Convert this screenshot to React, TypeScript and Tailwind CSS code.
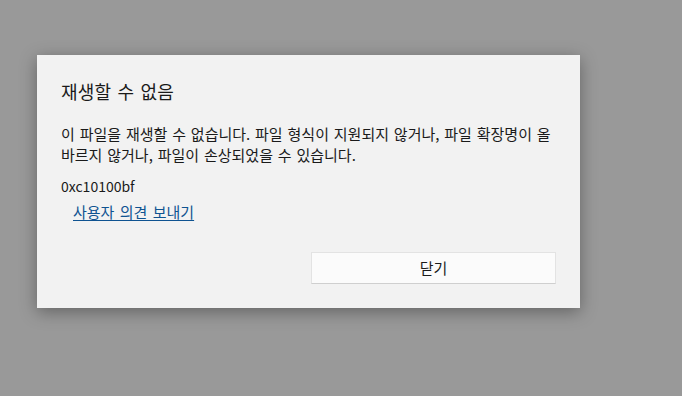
import React from 'react';

const App: React.FC = () => {
  return (
    <div
      className="w-[682px] h-[396px] bg-[#999999] pt-[55px] pl-[37px] overflow-hidden"
      style={{ fontFamily: '"Noto Sans CJK KR", "Noto Sans", sans-serif' }}
    >
      <div className="w-[543px] h-[253px] bg-[#f2f2f2] shadow-[0_4px_16px_rgba(0,0,0,0.35)] flex flex-col px-6 pt-[22px]">
        <h1 className="text-[18px] leading-[28px] tracking-[0.2px] [word-spacing:2px] text-[#1a1a1a]">재생할 수 없음</h1>
        <p className="mt-[18px] text-[15px] leading-[21px] [word-spacing:1.5px] break-all text-[#1a1a1a]">
          이 파일을 재생할 수 없습니다. 파일 형식이 지원되지 않거나, 파일 확장명이 올바르지 않거나, 파일이 손상되었을 수 있습니다.
        </p>
        <div className="mt-[11px] text-[14px] leading-[21px] text-[#1a1a1a]">0xc10100bf</div>
        <a href="#" className="mt-[4px] ml-3 self-start text-[15px] leading-[21px] [word-spacing:2px] text-[#0f5391] underline underline-offset-2">
          사용자 의견 보내기
        </a>
        <div className="flex justify-end mt-auto mb-6">
          <button className="w-[245px] h-[32px] bg-[#fbfbfb] border border-[#e3e3e3] border-b-[#cfcfcf] text-[15px] text-[#1a1a1a]">
            닫기
          </button>
        </div>
      </div>
    </div>
  );
};

export default App;
